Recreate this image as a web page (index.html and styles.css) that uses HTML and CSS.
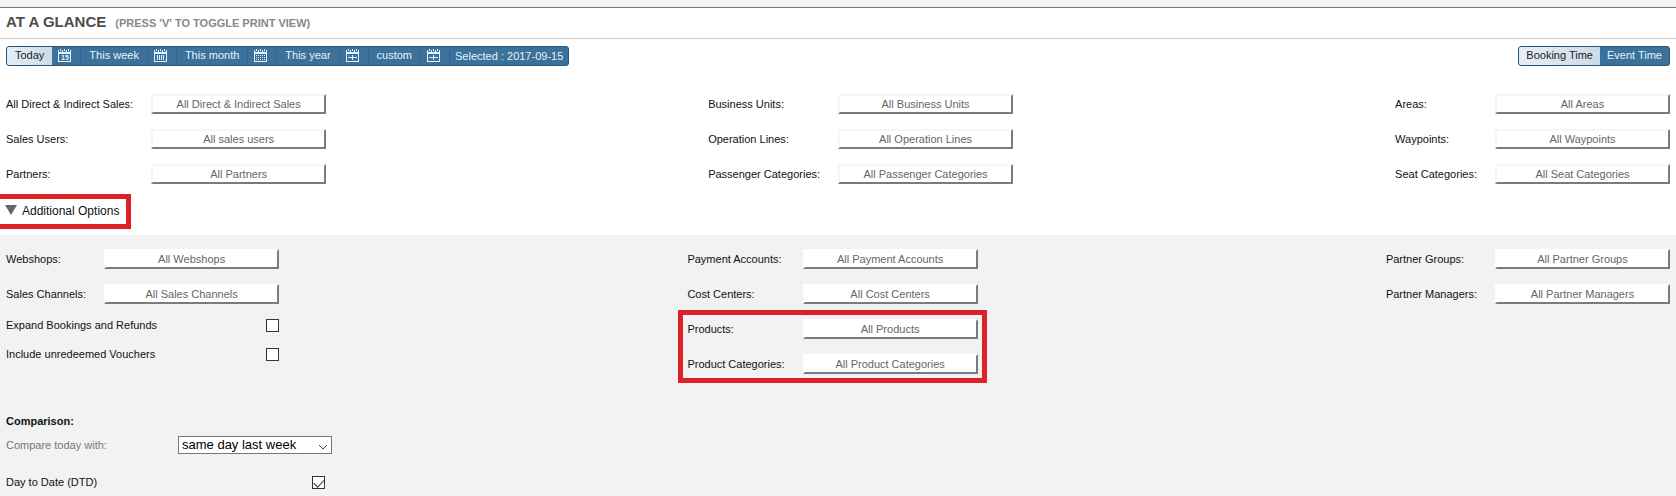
FILE: index.html
```html
<!DOCTYPE html>
<html lang="en">
<head>
  <meta charset="UTF-8">
  <meta name="viewport" content="width=device-width, initial-scale=1">
  <title>At a glance</title>
  <link rel="stylesheet" href="styles.css">
</head>
<body>

  <!-- calendar frame shared by all the range icons -->
  <svg class="sprite" aria-hidden="true">
    <symbol id="calendar" viewBox="0 0 13 13">
      <path d="M0 1h1v2h3V1h1v2h3V1h1v2h3V1h1v12H0z M1 5v7h11V5z" fill="#e4f3fb" fill-rule="evenodd"/>
      <path d="M2 0h1v2H2zM6 0h1v2H6zM10 0h1v2h-1z" fill="#e4f3fb"/>
    </symbol>
  </svg>

  <div class="top-strip"></div>

  <header class="page-header">
    <h1>AT A GLANCE</h1>
    <span class="hint">(PRESS 'V' TO TOGGLE PRINT VIEW)</span>
  </header>

  <div class="toolbar">
    <div class="segments">
      <button type="button" class="active">Today</button>
      <button type="button" class="icon" aria-label="Pick a day">
        <svg width="13" height="13"><use href="#calendar"/><text x="7" y="11" class="day">15</text></svg>
      </button>
      <button type="button">This week</button>
      <button type="button" class="icon" aria-label="Pick a week">
        <svg width="13" height="13"><use href="#calendar"/><path d="M3.5 6v5M5.5 6v5M7.5 6v5M9.5 6v5" stroke="#e4f3fb"/></svg>
      </button>
      <button type="button">This month</button>
      <button type="button" class="icon" aria-label="Pick a month">
        <svg width="13" height="13"><use href="#calendar"/><path d="M2 6.5h9M2 8.5h9M2 10.5h9" stroke="#e4f3fb" stroke-dasharray="1 1"/></svg>
      </button>
      <button type="button">This year</button>
      <button type="button" class="icon" aria-label="Pick a year">
        <svg width="13" height="13"><use href="#calendar"/><path d="M2 8.5h9M6.5 6v5" stroke="#e4f3fb"/></svg>
      </button>
      <button type="button">custom</button>
      <button type="button" class="icon" aria-label="Pick a custom range">
        <svg width="13" height="13"><use href="#calendar"/><path d="M2 8.5h9M6.5 6v5" stroke="#e4f3fb"/></svg>
      </button>
      <span class="selected">Selected : 2017-09-15</span>
    </div>
    <div class="segments time-type">
      <button type="button" class="active">Booking Time</button>
      <button type="button">Event Time</button>
    </div>
  </div>

  <section class="filters">
    <div class="filter-group">
      <label for="sales">All Direct &amp; Indirect Sales:</label>
      <button type="button" class="picker" id="sales">All Direct &amp; Indirect Sales</button>
      <label for="users">Sales Users:</label>
      <button type="button" class="picker" id="users">All sales users</button>
      <label for="partners">Partners:</label>
      <button type="button" class="picker" id="partners">All Partners</button>
    </div>
    <div class="filter-group">
      <label for="units">Business Units:</label>
      <button type="button" class="picker" id="units">All Business Units</button>
      <label for="lines">Operation Lines:</label>
      <button type="button" class="picker" id="lines">All Operation Lines</button>
      <label for="passengers">Passenger Categories:</label>
      <button type="button" class="picker" id="passengers">All Passenger Categories</button>
    </div>
    <div class="filter-group">
      <label for="areas">Areas:</label>
      <button type="button" class="picker" id="areas">All Areas</button>
      <label for="waypoints">Waypoints:</label>
      <button type="button" class="picker" id="waypoints">All Waypoints</button>
      <label for="seats">Seat Categories:</label>
      <button type="button" class="picker" id="seats">All Seat Categories</button>
    </div>
  </section>

  <button type="button" class="options-toggle highlight" aria-expanded="true">
    <svg width="12" height="10" viewBox="0 0 12 10"><path d="M0 0h12L6 10z" fill="#666"/></svg>
    Additional Options
  </button>

  <section class="options">
    <div class="filters">
      <div>
        <div class="filter-group">
          <label for="webshops">Webshops:</label>
          <button type="button" class="picker" id="webshops">All Webshops</button>
          <label for="channels">Sales Channels:</label>
          <button type="button" class="picker" id="channels">All Sales Channels</button>
        </div>
        <div class="checks">
          <div class="check-row">
            <label for="expand">Expand Bookings and Refunds</label>
            <input type="checkbox" id="expand">
          </div>
          <div class="check-row">
            <label for="vouchers">Include unredeemed Vouchers</label>
            <input type="checkbox" id="vouchers">
          </div>
        </div>
      </div>
      <div class="filter-group">
        <label for="accounts">Payment Accounts:</label>
        <button type="button" class="picker" id="accounts">All Payment Accounts</button>
        <label for="centers">Cost Centers:</label>
        <button type="button" class="picker" id="centers">All Cost Centers</button>
        <div class="filter-group products highlight">
          <label for="products">Products:</label>
          <button type="button" class="picker" id="products">All Products</button>
          <label for="categories">Product Categories:</label>
          <button type="button" class="picker" id="categories">All Product Categories</button>
        </div>
      </div>
      <div class="filter-group">
        <label for="groups">Partner Groups:</label>
        <button type="button" class="picker" id="groups">All Partner Groups</button>
        <label for="managers">Partner Managers:</label>
        <button type="button" class="picker" id="managers">All Partner Managers</button>
      </div>
    </div>

    <div class="comparison">
      <h2>Comparison:</h2>
      <div class="compare-row">
        <label for="compare">Compare today with:</label>
        <div class="select">
          <select id="compare">
            <option>same day last week</option>
            <option>same day last month</option>
            <option>same day last year</option>
          </select>
          <svg width="10" height="6" viewBox="0 0 10 6"><path d="M1 1l4 4 4-4" fill="none" stroke="#444"/></svg>
        </div>
      </div>
      <div class="check-row">
        <label for="dtd">Day to Date (DTD)</label>
        <input type="checkbox" id="dtd" checked>
      </div>
    </div>
  </section>

</body>
</html>
```
FILE: styles.css
```css
* { margin: 0; padding: 0; box-sizing: border-box; }
body {
  font-family: "Liberation Sans", Arial, sans-serif;
  font-size: 11px;
  line-height: 14px;
  color: #111;
  background: #fff;
  min-height: 100vh;
  display: flex;
  flex-direction: column;
}
button, input, select { font: inherit; color: inherit; }
button { border: none; background: none; cursor: pointer; white-space: nowrap; }
.sprite { position: absolute; width: 0; height: 0; }

/* Header */
.top-strip {
  height: 8px;
  background: #f4f4f4;
  border-bottom: 1px solid #777;
}
.page-header {
  display: flex;
  align-items: baseline;
  gap: 9px;
  padding: 4px 6px 6px;
  border-bottom: 1px solid #ccc;
}
.page-header h1 {
  font-size: 15px;
  line-height: 20px;
  color: #4c4c4c;
}
.hint {
  font-weight: bold;
  color: #888;
}

/* Date range and time type */
.toolbar {
  display: flex;
  justify-content: space-between;
  padding: 7px 6px 0;
}
.segments {
  display: flex;
  height: 20px;
  background: #3b719b;
  border: 1px solid #2b5575;
  border-radius: 3px;
  color: #e4f3fb;
  overflow: hidden;
}
.segments button {
  padding: 0 8px 2px;
  border-right: 1px solid #35678e;
}
.segments button.icon { padding: 0 9px 2px 6px; }
.segments button.active {
  background: linear-gradient(to right, #e6edf4, #ccdbe9);
  color: #222;
  border-right: none;
}
.segments button:last-child { border-right: none; }
.time-type button,
.time-type button.active { padding: 0 7px 2px; }
.segments svg { display: block; }
.day {
  font-size: 7px;
  font-weight: bold;
  text-anchor: middle;
  fill: #e4f3fb;
}
.selected {
  padding: 0 5px;
  line-height: 18px;
}

/* Filters */
.filters {
  display: flex;
  justify-content: space-between;
  align-items: flex-start;
  padding: 28px 6px 0;
}
.filter-group {
  display: grid;
  grid-template-columns: max-content 175px;
  gap: 15px 18px;
  align-items: center;
}
.picker {
  height: 20px;
  background: #fff;
  border: 2px solid;
  border-color: #f6f6f6 #7b7b7b #7b7b7b #f6f6f6;
  color: #666;
}
.options .picker {
  border-top-color: #fff;
  border-left-color: #fff;
}
.products {
  grid-column: 1 / -1;
  grid-template-columns: subgrid;
}
.highlight {
  outline: 5px solid #de2027;
}
.products.highlight { outline-offset: 4px; }

.options-toggle {
  align-self: flex-start;
  display: flex;
  gap: 5px;
  margin-top: 15px;
  padding: 5px 7px 5px 5px;
  font-size: 12px;
  line-height: 15px;
}
.options-toggle svg { margin-top: 1px; }

/* Additional options */
.options {
  flex: 1;
  margin-top: 11px;
  background: #f2f2f2;
}
.options .filters { padding-top: 14px; }
.checks {
  display: flex;
  flex-direction: column;
  gap: 15px;
  margin-top: 14px;
}
.check-row {
  display: flex;
  justify-content: space-between;
  align-items: center;
}
input[type="checkbox"] {
  appearance: none;
  width: 13px;
  height: 13px;
  background: #fff;
  border: 1px solid #333;
}
input[type="checkbox"]:checked::after {
  content: "";
  display: block;
  width: 9px;
  height: 5px;
  margin: 2px 1px;
  border: solid #333;
  border-width: 0 0 1px 1px;
  transform: rotate(-45deg);
}

/* Comparison */
.comparison {
  padding: 40px 6px 4px;
}
.comparison h2 {
  font-size: 11px;
  line-height: 14px;
}
.compare-row {
  display: grid;
  grid-template-columns: 172px 154px;
  align-items: center;
  margin: 8px 0 21px;
  color: #777;
}
.comparison .check-row { width: 319px; }
.select { position: relative; }
.select select {
  display: block;
  appearance: none;
  width: 100%;
  height: 18px;
  padding: 0 3px;
  background: #fff;
  border: 1px solid #777;
  border-radius: 0;
  color: #000;
  font-size: 13px;
}
.select svg {
  position: absolute;
  right: 4px;
  top: 8px;
  pointer-events: none;
}
```
